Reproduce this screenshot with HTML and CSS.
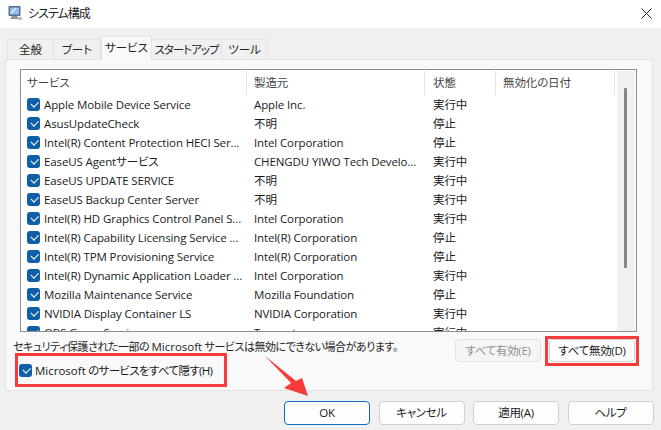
FILE: index.html
```html
<!DOCTYPE html>
<html lang="ja">
<head>
<meta charset="utf-8">
<title>システム構成</title>
<link rel="stylesheet" href="styles.css">
</head>
<body>
<div class="window">
  <header class="titlebar">
    <svg class="appicon" width="16" height="16" viewBox="0 0 16 16">
      <rect x="1.5" y="1" width="12" height="10" rx="1" fill="#5a6a8c"/>
      <rect x="3" y="2.5" width="9" height="7" fill="#8fc0ea"/>
      <path d="M4 8l5-5" stroke="#e8f4ff" stroke-width="1.2"/>
      <path d="M5 11h5l2 3H3z" fill="#8d93a3"/>
      <rect x="11" y="12" width="4" height="3" fill="#b9bdc7"/>
    </svg>
    <span class="title">システム構成</span>
    <svg class="close" width="11" height="11" viewBox="0 0 11 11"><path d="M.5.5l10 10M10.5.5l-10 10" stroke="#222" stroke-width="1" fill="none"/></svg>
  </header>
  <main class="content">
    <nav class="tabs">
      <span class="tab t1">全般</span>
      <span class="tab t2">ブート</span>
      <span class="tab active">サービス</span>
      <span class="tab t4">スタートアップ</span>
      <span class="tab t5">ツール</span>
    </nav>
    <section class="panel">
      <div class="list">
        <div class="grid-area">
          <div class="row head">
            <span class="c1">サービス</span><span class="c2">製造元</span><span class="c3">状態</span><span class="c4">無効化の日付</span>
          </div>
          <div class="row"><span class="c1"><i class="check"></i>Apple Mobile Device Service</span><span class="c2">Apple Inc.</span><span class="c3">実行中</span></div>
          <div class="row"><span class="c1"><i class="check"></i>AsusUpdateCheck</span><span class="c2">不明</span><span class="c3">停止</span></div>
          <div class="row"><span class="c1"><i class="check"></i>Intel(R) Content Protection HECI Ser...</span><span class="c2">Intel Corporation</span><span class="c3">停止</span></div>
          <div class="row"><span class="c1"><i class="check"></i>EaseUS Agentサービス</span><span class="c2">CHENGDU YIWO Tech Develo...</span><span class="c3">実行中</span></div>
          <div class="row"><span class="c1"><i class="check"></i>EaseUS UPDATE SERVICE</span><span class="c2">不明</span><span class="c3">実行中</span></div>
          <div class="row"><span class="c1"><i class="check"></i>EaseUS Backup Center Server</span><span class="c2">不明</span><span class="c3">実行中</span></div>
          <div class="row"><span class="c1"><i class="check"></i>Intel(R) HD Graphics Control Panel S...</span><span class="c2">Intel Corporation</span><span class="c3">実行中</span></div>
          <div class="row"><span class="c1"><i class="check"></i>Intel(R) Capability Licensing Service ...</span><span class="c2">Intel(R) Corporation</span><span class="c3">停止</span></div>
          <div class="row"><span class="c1"><i class="check"></i>Intel(R) TPM Provisioning Service</span><span class="c2">Intel(R) Corporation</span><span class="c3">停止</span></div>
          <div class="row"><span class="c1"><i class="check"></i>Intel(R) Dynamic Application Loader ...</span><span class="c2">Intel Corporation</span><span class="c3">実行中</span></div>
          <div class="row"><span class="c1"><i class="check"></i>Mozilla Maintenance Service</span><span class="c2">Mozilla Foundation</span><span class="c3">停止</span></div>
          <div class="row"><span class="c1"><i class="check"></i>NVIDIA Display Container LS</span><span class="c2">NVIDIA Corporation</span><span class="c3">実行中</span></div>
          <div class="row"><span class="c1"><i class="check"></i>OBS Game Service</span><span class="c2">Tencent</span><span class="c3">実行中</span></div>
        </div>
        <div class="scrollbar"><div class="thumb"></div></div>
      </div>
      <div class="notice">
        <p class="note">セキュリティ保護された一部の <span class="latin">Microsoft</span> サービスは無効にできない場合があります。</p>
        <button class="btn disabled">すべて有効(E)</button>
        <button class="btn">すべて無効(D)</button>
      </div>
      <label class="hide"><i class="check"></i><span class="latin">Microsoft</span> のサービスをすべて隠す(H)</label>
    </section>
    <footer class="actions">
      <button class="btn big primary">OK</button>
      <button class="btn big">キャンセル</button>
      <button class="btn big">適用(A)</button>
      <button class="btn big">ヘルプ</button>
    </footer>
  </main>
  <div class="mark mark-hide"></div>
  <div class="mark mark-disable"></div>
  <svg class="arrow" width="45" height="42" viewBox="0 0 45 42"><path d="M0 0L31 25 37 22 43 40 19 32 26 27z" fill="#f73b3b"/></svg>
</div>
</body>
</html>
```
FILE: styles.css
```css
* { box-sizing: border-box; }
html, body { margin: 0; padding: 0; }
body {
  width: 661px;
  height: 430px;
  overflow: hidden;
  font-family: "Open Sans", "Noto Sans CJK JP", sans-serif;
  font-feature-settings: "palt";
  font-size: 11.5px;
  color: #1a1a1a;
}
.window { position: relative; width: 661px; height: 430px; background: #f0f0f0; display: flex; flex-direction: column; }
.titlebar { height: 28px; background: #fff; display: flex; align-items: center; padding: 0 9px 2px 7px; flex: none; }
.appicon { flex: none; }
.title { margin-left: 5px; font-size: 12px; flex: 1; color: #222; letter-spacing: -1px; }
.close { flex: none; }
.content { flex: 1; padding: 8px 8px 0 5px; display: flex; flex-direction: column; min-height: 0; }
.tabs { display: flex; height: 23px; align-items: flex-end; padding-left: 2px; position: relative; z-index: 1; }
.tab {
  height: 20px;
  border: 1px solid #e4e4e4;
  border-bottom: 0;
  border-left-width: 0;
  background: #f0f0f0;
  display: flex; align-items: center; justify-content: center;
  font-size: 11.5px;
  line-height: 1;
  white-space: nowrap;
  color: #222;
}
.t1 { width: 47px; border-left-width: 1px; }
.t2 { width: 47px; }
.active { width: 51px; background: #f9f9f9; border: 1px solid #e4e4e4; border-bottom: 0; margin-bottom: -1px; height: 24px; padding-bottom: 2px; }
.t4 { width: 70px; border-left-width: 0; letter-spacing: -1px; }
.t5 { width: 46px; }
.panel {
  width: 648px;
  height: 332px;
  background: #f9f9f9;
  border: 1px solid #e2e2e2;
  padding: 9px 15px 0 14px;
  display: flex;
  flex-direction: column;
}
.list { width: 617px; height: 263px; flex: none; background: #fff; border: 1px solid #8a8f94; display: flex; overflow: hidden; }
.grid-area { flex: 1; min-width: 0; padding-top: 1px; }
.row { display: grid; grid-template-columns: 226px 178px 71px 119px; height: 19px; align-items: center; white-space: nowrap; font-size: 11.5px; line-height: 19px; letter-spacing: -.12px; }
.row span { overflow: hidden; }
.row .c1 { padding-left: 6px; display: flex; align-items: center; }
.row .c2 { padding-left: 7px; }
.row .c3 { padding-left: 8px; }
.row .c4 { padding-left: 7px; }
.head { height: 24px; color: #444; }
.head span { height: 24px; line-height: 24px; border-right: 1px solid #e5e5e5; }
.head .c1 { display: block; }
.check {
  flex: none;
  display: inline-block;
  width: 13px; height: 13px;
  border-radius: 3px;
  background: #0f5fa8;
  margin-right: 4px;
  position: relative;
}
.check::after {
  content: "";
  position: absolute;
  left: 3.5px; top: 3px;
  width: 6px; height: 3.5px;
  border-left: 1px solid #fff;
  border-bottom: 1px solid #fff;
  transform: rotate(-45deg);
}
.scrollbar { width: 19px; flex: none; background: #f0f0f0; margin: 1px 0 0; padding: 17px 0 0 7px; border-right: 1px solid #fff; }
.thumb { width: 3px; height: 180px; background: #858585; border-radius: 1px; }
.notice { display: flex; align-items: flex-start; height: 26px; padding-top: 7px; }
.note { margin: 0 0 0 -7px; flex: none; width: 442px; font-size: 11px; line-height: 16px; white-space: nowrap; letter-spacing: -.48px; color: #1f1f1f; }
.latin { letter-spacing: 0; font-size: 11.5px; }
.btn {
  font-family: inherit;
  font-feature-settings: "palt";
  font-size: 11.5px;
  line-height: 1;
  letter-spacing: -.3px;
  background: #fdfdfd;
  border: 1px solid #d0d0d0;
  border-radius: 4px;
  color: #1a1a1a;
  padding: 0;
  width: 86px;
  height: 23px;
  flex: none;
}
.notice .btn { margin-left: 8px; }
.notice .btn:first-of-type { margin-left: 0; }
.disabled { background: #f5f5f5; color: #8f8f8f; border-color: #e2e2e2; }
.hide { display: flex; align-items: center; height: 24px; margin-left: -1px; font-size: 11.5px; letter-spacing: -.65px; white-space: pre; }
.hide .check { margin-right: 3px; }
.actions { display: flex; padding: 10px 0 0 279px; gap: 8.5px; }
.big { width: 86px; height: 24px; }
.primary { border: 1px solid #0f6cbd; }
.mark { position: absolute; border: 3px solid #f73b3b; }
.mark-hide { left: 15px; top: 353px; width: 212px; height: 34px; }
.mark-disable { left: 545px; top: 336px; width: 94px; height: 30px; }
.arrow { position: absolute; left: 265px; top: 356px; }
```
